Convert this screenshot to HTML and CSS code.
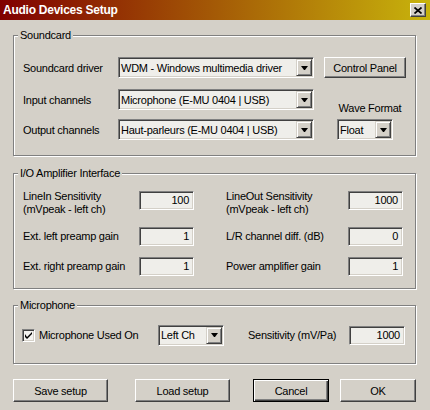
FILE: index.html
```html
<!DOCTYPE html>
<html lang="en">
<head>
    <meta charset="UTF-8">
    <title>Audio Devices Setup</title>
    <link rel="stylesheet" href="styles.css">
</head>
<body>
    <div class="window">
        <div class="titlebar">
            <span class="title">Audio Devices Setup</span>
            <span class="close-btn">
                <svg width="8" height="7" viewBox="0 0 8 7"><path d="M0.5 0.5 L7.5 6.5 M7.5 0.5 L0.5 6.5" stroke="#000" stroke-width="1.7" fill="none"/></svg>
            </span>
        </div>

        <fieldset class="group">
            <legend>Soundcard</legend>
            <div class="soundcard-body">
                <div class="device-rows">
                    <div class="device-row">
                        <span class="device-label">Soundcard driver</span>
                        <div class="combo combo-wide"><span class="combo-text">WDM - Windows multimedia driver</span><span class="combo-arrow"></span></div>
                    </div>
                    <div class="device-row row-input">
                        <span class="device-label">Input channels</span>
                        <div class="combo combo-wide"><span class="combo-text">Microphone (E-MU 0404 | USB)</span><span class="combo-arrow"></span></div>
                    </div>
                    <div class="device-row row-output">
                        <span class="device-label">Output channels</span>
                        <div class="combo combo-wide"><span class="combo-text">Haut-parleurs (E-MU 0404 | USB)</span><span class="combo-arrow"></span></div>
                    </div>
                </div>
                <div class="format-col">
                    <button class="btn btn-panel">Control Panel</button>
                    <span class="format-label">Wave Format</span>
                    <div class="combo combo-float"><span class="combo-text">Float</span><span class="combo-arrow"></span></div>
                </div>
            </div>
        </fieldset>

        <fieldset class="group group-io">
            <legend>I/O Amplifier Interface</legend>
            <div class="io-body">
                <span class="io-label io-top">LineIn Sensitivity<br>(mVpeak - left ch)</span>
                <div class="field io-top-field">100</div>
                <span></span>
                <span class="io-label io-top">LineOut Sensitivity<br>(mVpeak - left ch)</span>
                <div class="field io-top-field">1000</div>

                <span class="io-label">Ext. left preamp gain</span>
                <div class="field">1</div>
                <span></span>
                <span class="io-label">L/R channel diff. (dB)</span>
                <div class="field">0</div>

                <span class="io-label">Ext. right preamp gain</span>
                <div class="field">1</div>
                <span></span>
                <span class="io-label">Power amplifier gain</span>
                <div class="field">1</div>
            </div>
        </fieldset>

        <fieldset class="group group-mic">
            <legend>Microphone</legend>
            <div class="mic-body">
                <span class="checkbox">
                    <svg width="7" height="7" viewBox="0 0 7 7"><path d="M0 2 L0 5 L2 7 L7 2 L7 0 L2 5 Z" fill="#000"/></svg>
                </span>
                <span class="mic-label">Microphone Used On</span>
                <div class="combo combo-channel"><span class="combo-text">Left Ch</span><span class="combo-arrow"></span></div>
                <span class="sens-label">Sensitivity (mV/Pa)</span>
                <div class="field field-sens">1000</div>
            </div>
        </fieldset>

        <div class="actions">
            <button class="btn btn-save">Save setup</button>
            <button class="btn btn-load">Load setup</button>
            <button class="btn btn-cancel">Cancel</button>
            <button class="btn btn-ok">OK</button>
        </div>
    </div>
</body>
</html>
```

FILE: styles.css
```css
body {
    margin: 0;
    font-family: "Liberation Sans", Arial, sans-serif;
    font-size: 11px;
    letter-spacing: -0.25px;
    color: #000;
    background-color: #d4d0c8;
}
.window {
    width: 430px;
    height: 410px;
    overflow: hidden;
    background-color: #d4d0c8;
}
.titlebar {
    height: 20px;
    display: flex;
    align-items: center;
    justify-content: space-between;
    background: linear-gradient(to right, #800000, #c8b40c);
}
.title {
    padding-left: 3px;
    color: #fff;
    font-weight: bold;
    font-size: 12px;
}
.close-btn {
    width: 14px;
    height: 12px;
    margin-right: 4px;
    display: flex;
    align-items: center;
    justify-content: center;
    background-color: #d4d0c8;
    border: 1px solid;
    border-color: #fff #404040 #404040 #fff;
    box-shadow: inset -1px -1px 0 #808080;
}

/* group boxes */
.group {
    box-sizing: border-box;
    width: 403px;
    min-width: 0;
    margin: 9px 0 0 13px;
    padding: 0;
    border: 1px solid #808080;
    box-shadow: inset 1px 1px 0 #fff, 1px 1px 0 #fff;
}
.group legend {
    margin-left: 4px;
    padding: 0 2px;
    line-height: 13px;
    background-color: #d4d0c8;
}
.group-io {
    margin-top: 11px;
}
.group-mic {
    margin-top: 10px;
}

/* combo boxes and text fields */
.combo {
    box-sizing: border-box;
    height: 21px;
    display: flex;
    align-items: center;
    background-color: #efeeea;
    border: 1px solid;
    border-color: #808080 #fff #fff #808080;
    box-shadow: inset 1px 1px 0 #404040, inset -1px -1px 0 #d4d0c8;
}
.combo-text {
    flex: 1;
    padding-left: 2px;
    white-space: nowrap;
    overflow: hidden;
}
.combo-arrow {
    box-sizing: border-box;
    width: 16px;
    height: 17px;
    margin-right: 1px;
    display: flex;
    align-items: center;
    justify-content: center;
    background-color: #d4d0c8;
    border: 1px solid;
    border-color: #d4d0c8 #404040 #404040 #d4d0c8;
    box-shadow: inset 1px 1px 0 #fff, inset -1px -1px 0 #808080;
}
.combo-arrow::after {
    content: "";
    width: 1px;
    height: 0;
    border-top: 4px solid #000;
    border-left: 3px solid transparent;
    border-right: 3px solid transparent;
}
.field {
    box-sizing: border-box;
    width: 55px;
    height: 19px;
    padding-right: 4px;
    line-height: 17px;
    text-align: right;
    background-color: #efeeea;
    border: 1px solid;
    border-color: #808080 #fff #fff #808080;
    box-shadow: inset 1px 1px 0 #404040, inset -1px -1px 0 #d4d0c8;
}

/* buttons */
.btn {
    box-sizing: border-box;
    height: 23px;
    padding: 0;
    font-family: inherit;
    font-size: 11px;
    letter-spacing: inherit;
    color: #000;
    background-color: #d4d0c8;
    border: 1px solid;
    border-color: #fff #404040 #404040 #fff;
    box-shadow: inset -1px -1px 0 #808080;
}

/* soundcard */
.soundcard-body {
    display: flex;
    padding: 15px 0 15px 9px;
}
.device-row {
    height: 21px;
    display: flex;
    align-items: center;
}
.row-input {
    margin-top: 11px;
}
.row-output {
    margin-top: 9px;
}
.device-label {
    width: 95px;
}
.combo-wide {
    width: 196px;
}
.format-col {
    width: 82px;
    margin-left: 10px;
    display: flex;
    flex-direction: column;
    align-items: center;
}
.btn-panel {
    width: 82px;
    height: 21px;
}
.format-label {
    margin-top: 24px;
    margin-left: 10px;
    line-height: 13px;
}
.combo-float {
    width: 56px;
    margin-top: 4px;
}

/* I/O amplifier */
.io-body {
    display: grid;
    grid-template-columns: 116px 55px 32px 122px 55px;
    grid-template-rows: 26px 19px 19px;
    row-gap: 11px;
    align-items: center;
    padding: 10px 0 12px 9px;
}
.io-label {
    line-height: 13px;
}
.io-top {
    align-self: start;
}
.io-top-field {
    align-self: start;
    margin-top: 1px;
}

/* microphone */
.mic-body {
    height: 22px;
    display: flex;
    align-items: center;
    padding: 12px 0 17px 8px;
}
.checkbox {
    box-sizing: border-box;
    width: 13px;
    height: 13px;
    margin-right: 4px;
    display: flex;
    align-items: center;
    justify-content: center;
    background-color: #f4f3f0;
    border: 1px solid;
    border-color: #808080 #fff #fff #808080;
    box-shadow: inset 1px 1px 0 #404040, inset -1px -1px 0 #d4d0c8;
}
.mic-label {
    width: 119px;
}
.combo-channel {
    width: 66px;
}
.sens-label {
    width: 101px;
    margin-left: 24px;
}
.field-sens {
    width: 56px;
}

/* bottom buttons */
.actions {
    display: flex;
    margin: 15px 0 0 13px;
}
.btn-save,
.btn-load {
    width: 95px;
}
.btn-load {
    margin-left: 27px;
}
.btn-cancel,
.btn-ok {
    width: 76px;
}
.btn-cancel {
    margin-left: 23px;
    border-color: #000;
    box-shadow: inset 1px 1px 0 #fff, inset -1px -1px 0 #404040, inset -2px -2px 0 #808080;
}
.btn-ok {
    margin-left: 11px;
}
```
